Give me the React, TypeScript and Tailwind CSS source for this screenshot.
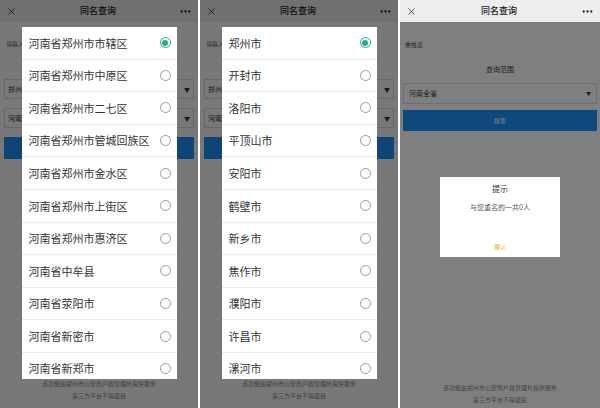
import React from "react";
import { X, MoreHorizontal } from "lucide-react";

const FONT = { fontFamily: '"Noto Sans CJK SC", "Noto Sans", sans-serif' };

const districts = [
  "河南省郑州市市辖区",
  "河南省郑州市中原区",
  "河南省郑州市二七区",
  "河南省郑州市管城回族区",
  "河南省郑州市金水区",
  "河南省郑州市上街区",
  "河南省郑州市惠济区",
  "河南省中牟县",
  "河南省荥阳市",
  "河南省新密市",
  "河南省新郑市",
];

const cities = [
  "郑州市",
  "开封市",
  "洛阳市",
  "平顶山市",
  "安阳市",
  "鹤壁市",
  "新乡市",
  "焦作市",
  "濮阳市",
  "许昌市",
  "漯河市",
];

function Header() {
  return (
    <div className="flex h-[22px] items-center justify-between bg-[#ededed] px-[6px] text-[#222]">
      <X size={11} strokeWidth={1.6} />
      <span className="text-[9px] font-medium">同名查询</span>
      <MoreHorizontal size={13} strokeWidth={2.2} />
    </div>
  );
}

function Footer({ pb }: { pb: string }) {
  return (
    <div className={`mt-auto flex flex-col items-center text-[6px] leading-[12px] text-[#888] ${pb}`}>
      <span>该功能由郑州市公安局户政管理处提供服务</span>
      <span>第三方平台不得盗链</span>
    </div>
  );
}

function Radio({ on }: { on: boolean }) {
  if (on) {
    return (
      <span className="flex h-[11px] w-[11px] items-center justify-center rounded-full border border-[#1fae8c]">
        <span className="h-[6px] w-[6px] rounded-full bg-[#1fae8c]" />
      </span>
    );
  }
  return <span className="h-[11px] w-[11px] rounded-full border border-[#9a9a9a]" />;
}

function PickerPanel({ items }: { items: string[] }) {
  return (
    <div className="relative flex h-full w-[198px] flex-col bg-white">
      <Header />
      <div className="pl-[6px] pt-[17px] text-[6px] text-[#555]">请输入</div>
      <div className="mx-[4px] mt-[31px] flex h-[20px] items-center justify-between border border-[#ddd] px-[3px] text-[7px] text-[#333]">
        <span>郑州市</span>
        <span className="text-[6px]">▼</span>
      </div>
      <div className="mx-[4px] mt-[9px] flex h-[20px] items-center justify-between border border-[#ddd] px-[3px] text-[7px] text-[#333]">
        <span>河南省</span>
        <span className="text-[6px]">▼</span>
      </div>
      <div className="mx-[4px] mt-[9px] h-[22px] bg-[#1a93fb]" />
      <Footer pb="pb-[6px]" />

      <div className="absolute inset-0 bg-black/[0.53]">
        <div className="mx-auto mt-[27px] h-[352px] w-[155px] overflow-hidden bg-white">
          {items.map((t, i) => (
            <div
              key={t}
              className="flex h-[32.6px] items-center justify-between border-b border-[#ececec] pl-[7px] pr-[6px] text-[11px] text-[#333]"
            >
              <span>{t}</span>
              <Radio on={i === 0} />
            </div>
          ))}
        </div>
      </div>
    </div>
  );
}

function ResultPanel() {
  return (
    <div className="relative flex h-full w-[200px] flex-col bg-white">
      <Header />
      <div className="pl-[5px] pt-[18px] text-[6px] text-[#444]">重姓表</div>
      <div className="mt-[15px] text-center text-[7px] text-[#444]">查询范围</div>
      <div className="mx-[3px] mt-[8px] flex h-[21px] items-center justify-between border border-[#ddd] px-[5px] text-[7px] text-[#333]">
        <span>河南全省</span>
        <span className="text-[5px]">▼</span>
      </div>
      <div className="mx-[3px] mt-[6px] flex h-[21px] items-center justify-center bg-[#1a93fb] text-[6px] text-white">
        搜索
      </div>
      <Footer pb="pb-[2px]" />

      <div className="absolute inset-x-0 bottom-0 top-[22px] flex items-start justify-center bg-black/50">
        <div className="mt-[155px] flex h-[80px] w-[120px] flex-col items-center bg-white">
          <span className="mt-[6px] text-[8px] leading-[12px] text-[#333]">提示</span>
          <span className="mt-[7px] text-[7px] leading-[10px] text-[#555]">与您重名的一共0人</span>
          <span className="mt-auto mb-[6px] text-[6px] text-[#e8b22a]">确认</span>
        </div>
      </div>
    </div>
  );
}

export default function App() {
  return (
    <div className="flex h-[408px] w-[600px] gap-[2px] overflow-hidden bg-white" style={FONT}>
      <PickerPanel items={districts} />
      <PickerPanel items={cities} />
      <ResultPanel />
    </div>
  );
}
